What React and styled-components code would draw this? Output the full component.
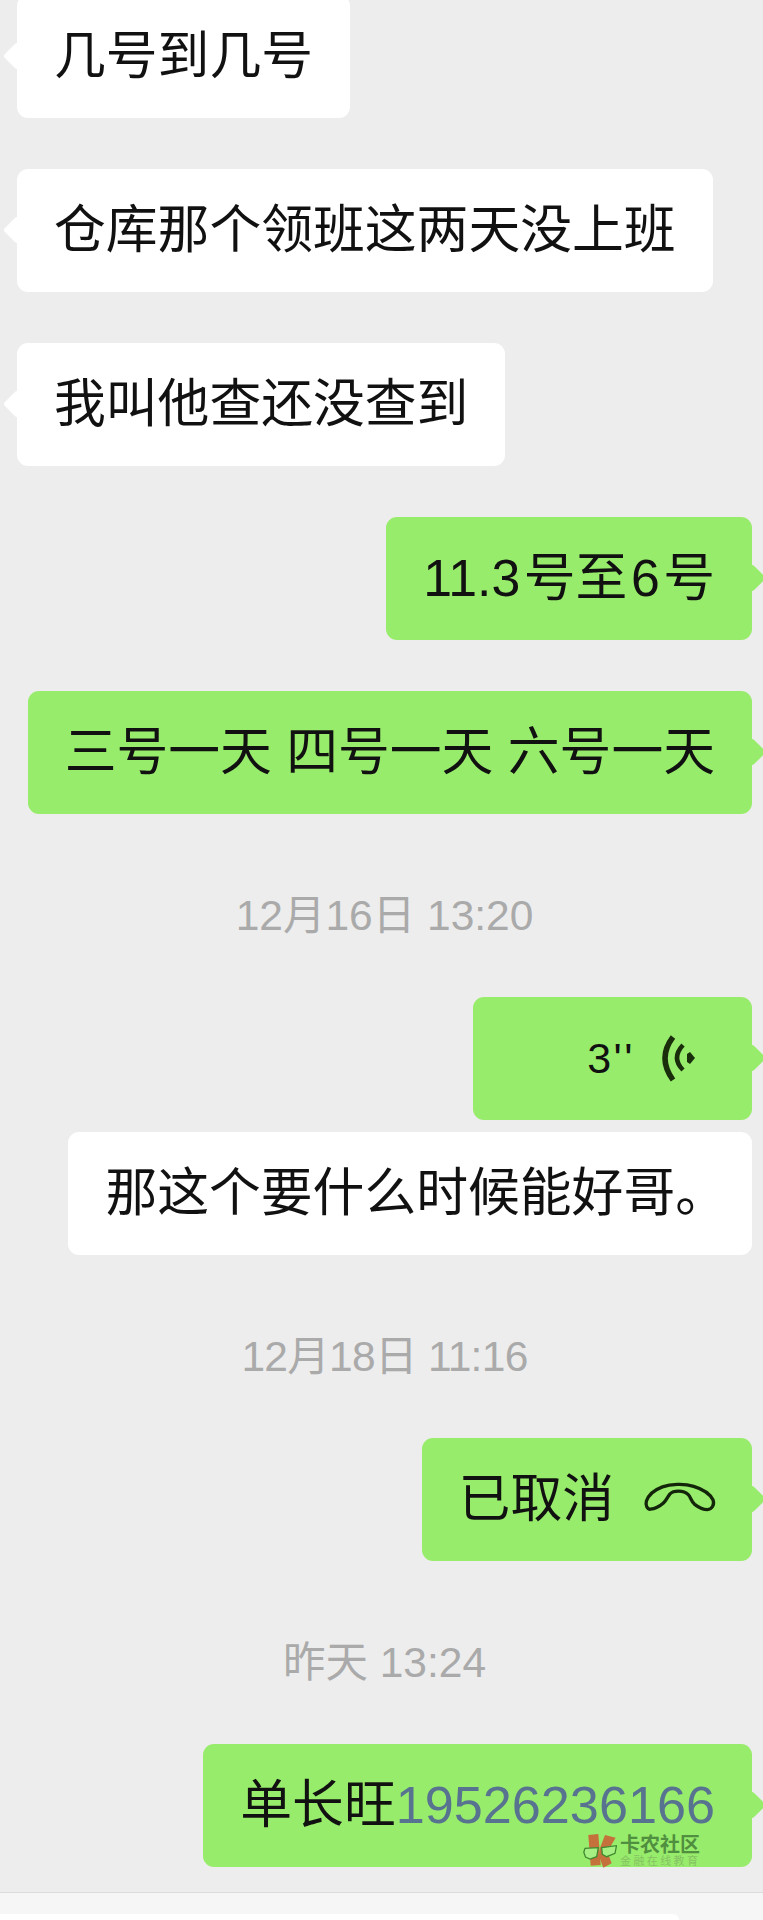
import React from "react";
import styled, { createGlobalStyle } from "styled-components";

const GlobalStyle = createGlobalStyle`
  html, body {
    margin: 0;
    padding: 0;
    background: #ededed;
  }
`;

const Page = styled.div`
  position: relative;
  width: 763px;
  height: 1920px;
  overflow: hidden;
  display: flex;
  flex-direction: column;
  background: #ededed;
  font-family: "Liberation Sans", "Noto Sans CJK SC", sans-serif;
`;

const Messages = styled.div`
  display: flex;
  flex-direction: column;
  flex: 1;
  margin-top: -5px;
  padding: 0 11px 0 17px;
`;

const Row = styled.div`
  display: flex;
  justify-content: ${({ $mine }) => ($mine ? "flex-end" : "flex-start")};
  margin-bottom: ${({ $tight }) => ($tight ? "12.5px" : "51.5px")};

  &:last-child {
    margin-bottom: 0;
  }
`;

const Bubble = styled.div`
  position: relative;
  display: flex;
  align-items: center;
  justify-content: ${({ $width }) => ($width ? "flex-end" : "flex-start")};
  width: ${({ $width }) => ($width ? `${$width}px` : "auto")};
  height: 122.5px;
  box-sizing: border-box;
  padding: 0 37px;
  border-radius: 11px;
  font-size: 51.8px;
  line-height: 60px;
  white-space: pre;
  color: #111;
  background: ${({ $mine, $plain }) => ($mine && !$plain ? "#98ec6b" : "#ffffff")};
`;

const Tail = styled.span`
  position: absolute;
  top: 51px;
  width: 20px;
  height: 20px;
  border-radius: 3px;
  transform: rotate(45deg);
  background: ${({ $mine }) => ($mine ? "#98ec6b" : "#ffffff")};
  ${({ $mine }) => ($mine ? "right: -10px;" : "left: -10px;")}
`;

const TimeRow = styled.div`
  height: 60px;
  margin: 21px 0 51px;
  font-size: 42.5px;
  line-height: 60px;
  letter-spacing: ${({ $narrow }) => ($narrow ? "-0.7px" : "0")};
  text-align: center;
  color: #aaaaaa;
`;

const Duration = styled.span`
  font-size: 43px;
  letter-spacing: 2.5px;
  margin-right: 25px;
`;

const VoiceSvg = styled.svg`
  margin-right: 15px;
`;

const CallSvg = styled.svg`
  margin: 0 -2px 0 29px;
`;

const Phone = styled.span`
  font-size: 52.2px;
  color: #587390;
`;

const NumberGap = styled.span`
  margin-left: 3.5px;
`;

const NarrowStop = styled.span`
  margin-right: -12px;
`;

const Footer = styled.div`
  height: 28px;
  box-sizing: border-box;
  border-top: 1px solid #dcdcdc;
  padding-top: 21px;
  background: #f6f6f6;
`;

const InputBox = styled.div`
  height: 6px;
  margin-right: 84px;
  border-radius: 0 8px 0 0;
  background: #ffffff;
`;

const Watermark = styled.div`
  position: absolute;
  left: 583px;
  top: 1833px;
  display: flex;
  gap: 3px;
`;

const MarkText = styled.div`
  display: flex;
  flex-direction: column;
  padding-top: 1px;
`;

const MarkTitle = styled.div`
  font-family: "Noto Sans CJK SC", sans-serif;
  font-size: 20px;
  line-height: 20px;
  font-weight: 700;
  color: #4f8f3f;
`;

const MarkSub = styled.div`
  font-family: "Noto Sans CJK SC", sans-serif;
  font-size: 11px;
  line-height: 12px;
  letter-spacing: 2.4px;
  white-space: nowrap;
  color: #84c262;
`;

function VoiceIcon() {
  return (
    <VoiceSvg width="40" height="56" viewBox="0 0 40 56" fill="none">
      <path d="M27 24l3-2 5 6-5 6-3-2z" fill="#1a2e0c" />
      <path d="M23 15Q11 28 23 40" stroke="#1a2e0c" strokeWidth="4.5" />
      <path d="M13 7Q-3 28 13 50" stroke="#1a2e0c" strokeWidth="5.5" />
    </VoiceSvg>
  );
}

function HangUpIcon() {
  return (
    <CallSvg width="74" height="36" viewBox="0 0 76 36" fill="none">
      <path
        d="M3.5 20C6 13 12 8.5 20 5.5C28 2.8 42 1.8 52 5C62 8 69 13 72 19C73.5 24 71 28.5 66 29C62 29 57 26.5 53 23.5C49.5 20.5 49 16 46.5 13.5C43.5 10.5 40 10 36.5 10C32 10 29.5 11 27.5 13C25 16 24 19.5 21 22C17 25.5 12 28 7.5 28.5C4 28.5 2.5 24 3.5 20Z"
        stroke="#14260a"
        strokeWidth="3.4"
        strokeLinejoin="round"
      />
    </CallSvg>
  );
}

function WatermarkLogo() {
  return (
    <svg width="34" height="35" viewBox="0 0 34 35">
      <path d="M5.3 2L15.3 1 17.7 32 7.7 32.7z" fill="#c4713c" />
      <path d="M22 2L32.7 4.7 24.3 18.7 28.7 30.3 20.3 34.7 16.3 23.7 17 15z" fill="#c4713c" />
      <path
        d="M.8 19.3L2 15.3 15.3 14.7 13.7 23.7 7 26 2.5 24zM18.7 14.7L33.5 12.7 32 20.3 23.7 23.7 19.3 21.3z"
        fill="#a6ef82"
        stroke="#3f8a30"
        strokeWidth="1.3"
      />
    </svg>
  );
}

function Message({ mine, plain, tight, width, children }) {
  return (
    <Row $mine={mine} $tight={tight}>
      <Bubble $mine={mine} $plain={plain} $width={width}>
        {!plain && <Tail $mine={mine} />}
        {children}
      </Bubble>
    </Row>
  );
}

export default function App() {
  return (
    <Page>
      <GlobalStyle />
      <Messages>
        <Message>几号到几号</Message>
        <Message>仓库那个领班这两天没上班</Message>
        <Message>我叫他查还没查到</Message>
        <Message mine>
          11.3<NumberGap>号至</NumberGap>
          <NumberGap>6</NumberGap>
          <NumberGap>号</NumberGap>
        </Message>
        <Message mine>三号一天 四号一天 六号一天</Message>
        <TimeRow>12月16日 13:20</TimeRow>
        <Message mine tight width={279}>
          <Duration>3''</Duration>
          <VoiceIcon />
        </Message>
        <Message mine plain>
          那这个要什么时候能好哥<NarrowStop>。</NarrowStop>
        </Message>
        <TimeRow $narrow>12月18日 11:16</TimeRow>
        <Message mine>
          已取消
          <HangUpIcon />
        </Message>
        <TimeRow>昨天 13:24</TimeRow>
        <Message mine>
          单长旺<Phone>19526236166</Phone>
        </Message>
      </Messages>
      <Footer>
        <InputBox />
      </Footer>
      <Watermark>
        <WatermarkLogo />
        <MarkText>
          <MarkTitle>卡农社区</MarkTitle>
          <MarkSub>金融在线教育</MarkSub>
        </MarkText>
      </Watermark>
    </Page>
  );
}
